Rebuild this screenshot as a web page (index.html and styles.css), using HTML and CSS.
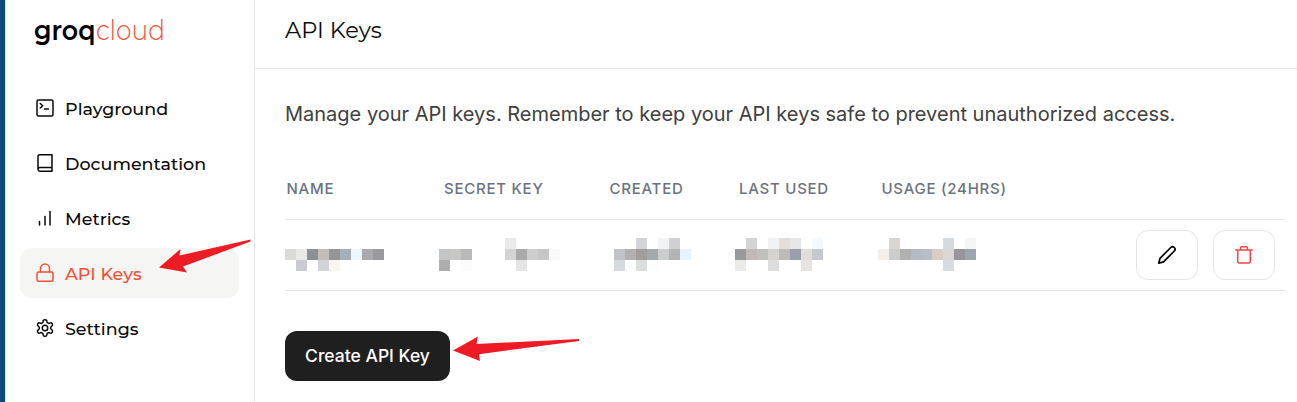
FILE: index.html
```html
<!DOCTYPE html>
<html lang="en">
<head>
<meta charset="utf-8">
<title>API Keys</title>
<link rel="stylesheet" href="styles.css">
</head>
<body>
<div class="app">
<aside class="sidebar">
  <svg class="logo" width="132" height="40" viewBox="0 0 132 40"><text class="logo-groq" x="0" y="28" textLength="61.500" lengthAdjust="spacingAndGlyphs">groq</text><text class="logo-cloud" x="62" y="28" textLength="69" lengthAdjust="spacingAndGlyphs">cloud</text></svg>
  <nav class="nav">
    <a class="item"><svg class="icon" viewBox="0 0 20 20"><rect x="2" y="2" width="16" height="16" rx="1.5"/><path d="M5.2 5.5 7.7 7.7 5.2 10M9.5 11h4"/></svg><span>Playground</span></a>
    <a class="item"><svg class="icon" viewBox="0 0 20 20"><path d="M17 14.5H5a2 2 0 0 0-2 2V3.5A1.8 1.8 0 0 1 4.800 1.700H17v16.500H4.800A1.800 1.800 0 0 1 3 16.500"/></svg><span>Documentation</span></a>
    <a class="item"><svg class="icon" viewBox="0 0 20 20"><path d="M4.500 13.500V17M10 8.500V17M15 3.500V17"/></svg><span>Metrics</span></a>
    <a class="item active"><svg class="icon" viewBox="0 0 20 20"><rect x="2" y="9" width="16" height="9.200" rx="1.500"/><path d="M5.500 9V5.500a4.500 4.500 0 0 1 9 0V9"/></svg><span>API Keys</span></a>
    <a class="item"><svg class="icon" viewBox="0 0 24 24"><g stroke-width="1.800"><path d="M12.220 2h-.440a2 2 0 0 0-2 2v.180a2 2 0 0 1-1 1.730l-.430.250a2 2 0 0 1-2 0l-.150-.080a2 2 0 0 0-2.730.730l-.220.380a2 2 0 0 0 .730 2.730l.150.100a2 2 0 0 1 1 1.720v.510a2 2 0 0 1-1 1.740l-.150.090a2 2 0 0 0-.730 2.730l.220.380a2 2 0 0 0 2.730.730l.150-.080a2 2 0 0 1 2 0l.430.250a2 2 0 0 1 1 1.730V20a2 2 0 0 0 2 2h.440a2 2 0 0 0 2-2v-.180a2 2 0 0 1 1-1.730l.430-.250a2 2 0 0 1 2 0l.150.080a2 2 0 0 0 2.730-.730l.220-.390a2 2 0 0 0-.730-2.730l-.150-.080a2 2 0 0 1-1-1.740v-.500a2 2 0 0 1 1-1.740l.150-.090a2 2 0 0 0 .730-2.730l-.220-.380a2 2 0 0 0-2.730-.730l-.150.080a2 2 0 0 1-2 0l-.430-.250a2 2 0 0 1-1-1.730V4a2 2 0 0 0-2-2z"/><circle cx="12" cy="12" r="3.300"/></g></svg><span>Settings</span></a>
  </nav>
</aside>
<main class="main">
  <header class="topbar"><h1>API Keys</h1></header>
  <section class="content">
    <p class="intro">Manage your API keys. Remember to keep your API keys safe to prevent unauthorized access.</p>
    <div class="thead"><span>NAME</span><span>SECRET KEY</span><span>CREATED</span><span>LAST USED</span><span>USAGE (24HRS)</span></div>
    <div class="trow">
      <svg class="mosaic" viewBox="0 0 9 3" width="99" height="33"><path fill="#dadad9" d="M0 1h1v1H0z"/><path fill="#e9e9e8" d="M1 1h1v1H1z"/><path fill="#8c9194" d="M2 1h1v1H2z"/><path fill="#c1bdb8" d="M3 1h1v1H3z"/><path fill="#949596" d="M4 1h1v1H4z"/><path fill="#a5afb8" d="M5 1h1v1H5z"/><path fill="#edf7ff" d="M6 1h1v1H6z"/><path fill="#a8aaad" d="M7 1h1v1H7z"/><path fill="#9a9a9c" d="M8 1h1v1H8z"/><path fill="#c9cbd0" d="M1 2h1v1H1z"/><path fill="#d1d3d8" d="M3 2h1v1H3z"/><path fill="#f9f5f2" d="M4 2h1v1H4z"/></svg>
      <svg class="mosaic" viewBox="0 0 11 3" width="121" height="33"><path fill="#c4c5c7" d="M0 1h1v1H0z"/><path fill="#c7c7c6" d="M1 1h1v1H1z"/><path fill="#bababa" d="M2 1h1v1H2z"/><path fill="#adadad" d="M0 2h1v1H0z"/><path fill="#fbfbfb" d="M2 2h1v1H2z"/><path fill="#eaeaea" d="M6 0h1v1H6z"/><path fill="#d4d4d3" d="M6 1h1v1H6z"/><path fill="#aaa" d="M7 1h1v1H7z"/><path fill="#cecece" d="M8 1h1v1H8z"/><path fill="#c6c6c7" d="M9 1h1v1H9z"/><path fill="#fafafa" d="M10 1h1v1h-1z"/><path fill="#e5e5e5" d="M7 2h1v1H7z"/></svg>
      <svg class="mosaic" viewBox="0 0 7 3" width="77" height="33"><path fill="#d3d4d9" d="M2 0h1v1H2z"/><path fill="#f3f3f3" d="M4 0h1v1H4z"/><path fill="#cfcfd4" d="M5 0h1v1H5z"/><path fill="#c2c3c8" d="M0 1h1v1H0z"/><path fill="#b3b0b1" d="M1 1h1v1H1z"/><path fill="#a19d9c" d="M2 1h1v1H2z"/><path fill="#a4a9ac" d="M3 1h1v1H3z"/><path fill="#cbccce" d="M4 1h1v1H4z"/><path fill="#b4b4b4" d="M5 1h1v1H5z"/><path fill="#e5f3ff" d="M6 1h1v1H6z"/><path fill="#d5d9e0" d="M0 2h1v1H0z"/><path fill="#fdfdfe" d="M1 2h1v1H1zM3 2h1v1H3z"/><path fill="#dcdddd" d="M2 2h1v1H2z"/></svg>
      <svg class="mosaic" viewBox="0 0 8 3" width="88" height="33"><path fill="#d4d4d4" d="M1 0h1v1H1z"/><path fill="#f0f2f4" d="M3 0h1v1H3z"/><path fill="#e2dfdb" d="M4 0h1v1H4z"/><path fill="#e6e6e8" d="M5 0h1v1H5z"/><path fill="#f3faff" d="M7 0h1v1H7z"/><path fill="#98999b" d="M0 1h1v1H0z"/><path fill="#bfb9b7" d="M1 1h1v1H1z"/><path fill="#c0c0bf" d="M2 1h1v1H2z"/><path fill="#d5d2cf" d="M3 1h1v1H3z"/><path fill="#bcbbb7" d="M4 1h1v1H4z"/><path fill="#9b9eac" d="M5 1h1v1H5z"/><path fill="#e0ddd9" d="M6 1h1v1H6z"/><path fill="#c7c8cd" d="M7 1h1v1H7z"/><path fill="#eaeae8" d="M0 2h1v1H0z"/><path fill="#ddd" d="M3 2h1v1H3z"/><path fill="#e5e4e3" d="M6 2h1v1H6z"/></svg>
      <svg class="mosaic" viewBox="0 0 9 3" width="98" height="33" preserveAspectRatio="none"><path fill="#d9d6d2" d="M1 0h1v1H1z"/><path fill="#d5dadf" d="M6 0h1v1H6z"/><path fill="#f5f5f5" d="M8 0h1v1H8z"/><path fill="#f3efeb" d="M0 1h1v1H0z"/><path fill="#cacccd" d="M1 1h1v1H1z"/><path fill="#b0b0af" d="M2 1h1v1H2z"/><path fill="#b4bbc5" d="M3 1h1v1H3z"/><path fill="#b7bec6" d="M4 1h1v1H4z"/><path fill="#dbcdc5" d="M5 1h1v1H5z"/><path fill="#dad8d5" d="M6 1h1v1H6z"/><path fill="#98969c" d="M7 1h1v1H7z"/><path fill="#9da6ac" d="M8 1h1v1H8z"/><path fill="#d8dbe0" d="M6 2h1v1H6z"/></svg>
      <div class="actions">
        <button class="square" aria-label="Edit"><svg class="icon" viewBox="0 0 20 20"><path stroke-width="1.700" d="M1.800 18.200 3 13.300 13.800 2.500a2.300 2.300 0 0 1 3.500 3.500L6.500 16.900z"/></svg></button>
        <button class="square danger" aria-label="Delete"><svg class="icon" viewBox="0 0 20 20"><path d="M1.800 5h16.400M3.700 5v11.700a1.400 1.400 0 0 0 1.400 1.400h9.800a1.400 1.400 0 0 0 1.400-1.400V5M6.500 5V3.100a1.400 1.400 0 0 1 1.400-1.400h4.200a1.400 1.400 0 0 1 1.400 1.400V5"/></svg></button>
      </div>
    </div>
    <button class="create">Create API Key</button>
  </section>
</main>
</div>
<svg class="arrows" width="1297" height="402" viewBox="0 0 1297 402"><path d="M159 267.500 180.500 249l-1 6.500L250.500 239.500v2L183 266.500l4 6z"/><path d="M453 350.500 478 336.500l-1.500 7.500L579 339v2L479 354.200l1 6.800z"/></svg>
</body>
</html>
```
FILE: styles.css
```css
* { box-sizing: border-box; }
body { margin: 0; height: 402px; overflow: hidden; background: #fff; font-family: Inter, sans-serif; }
button { font: inherit; margin: 0; }
.app { display: flex; height: 402px; border-left: 5px solid #0c4a7b; }
.sidebar { width: 250px; flex: none; border-left: 1px solid #dfe5ea; border-right: 1px solid #e5e5e5; padding: 12px 15px 0 14px; }
.logo { display: block; margin-left: 14px; overflow: visible; }
.logo-groq { font: 600 28px Montserrat, Lato, sans-serif; fill: #000; }
.logo-cloud { font: 300 28.500px Montserrat, Lato, sans-serif; fill: #f55036; }
.nav { margin-top: 31px; display: flex; flex-direction: column; gap: 5px; }
.item { height: 50px; display: flex; align-items: center; gap: 10px; padding-left: 15px; border-radius: 12px; color: #0a0a0a; font: 500 17.500px/28px Montserrat, Inter, sans-serif; white-space: nowrap; }
.item span { padding-top: 1px; }
.active { background: #f5f5f4; color: #f55036; }
.icon { width: 20px; height: 20px; flex: none; fill: none; stroke: currentColor; stroke-width: 1.500; stroke-linecap: round; stroke-linejoin: round; }
.main { flex: 1; }
.topbar { height: 69px; border-bottom: 1px solid #e5e5e5; padding: 14px 30px 0; }
h1 { margin: 0; font: 400 22.500px/32px Montserrat, Inter, sans-serif; color: #0a0a0a; }
.content { padding: 30px 12px 0 30px; }
.intro { margin: 0; font-size: 20px; line-height: 30px; color: #404040; white-space: nowrap; }
.thead { margin-top: 29px; height: 62px; border-bottom: 1px solid #e5e5e5; padding-left: 1.500px; display: grid; grid-template-columns: 157.500px 165.500px 129.500px 142.500px 1fr; align-items: center; font-weight: 500; font-size: 15px; letter-spacing: .75px; color: #6b7280; white-space: nowrap; }
.trow { height: 71px; border-bottom: 1px solid #e5e5e5; display: grid; grid-template-columns: 154px 175px 121px 143px 1fr auto; align-items: center; }
.mosaic { display: block; shape-rendering: crispEdges; margin-bottom: 1px; }
.actions { display: flex; gap: 15px; padding-right: 10px; }
.square { width: 62px; height: 50px; border: 1px solid #e5e5e5; border-radius: 12px; background: #fff; display: flex; align-items: center; justify-content: center; color: #000; padding: 0; }
.danger { color: #ef4444; }
.create { display: block; margin-top: 40px; width: 165px; height: 50px; border: 0; padding: 0 0 2px; border-radius: 12px; background: #1f1f1f; color: #fff; font-weight: 500; font-size: 17.500px; white-space: nowrap; }
.arrows { position: absolute; left: 0; top: 0; fill: #ed1c24; pointer-events: none; }
```
